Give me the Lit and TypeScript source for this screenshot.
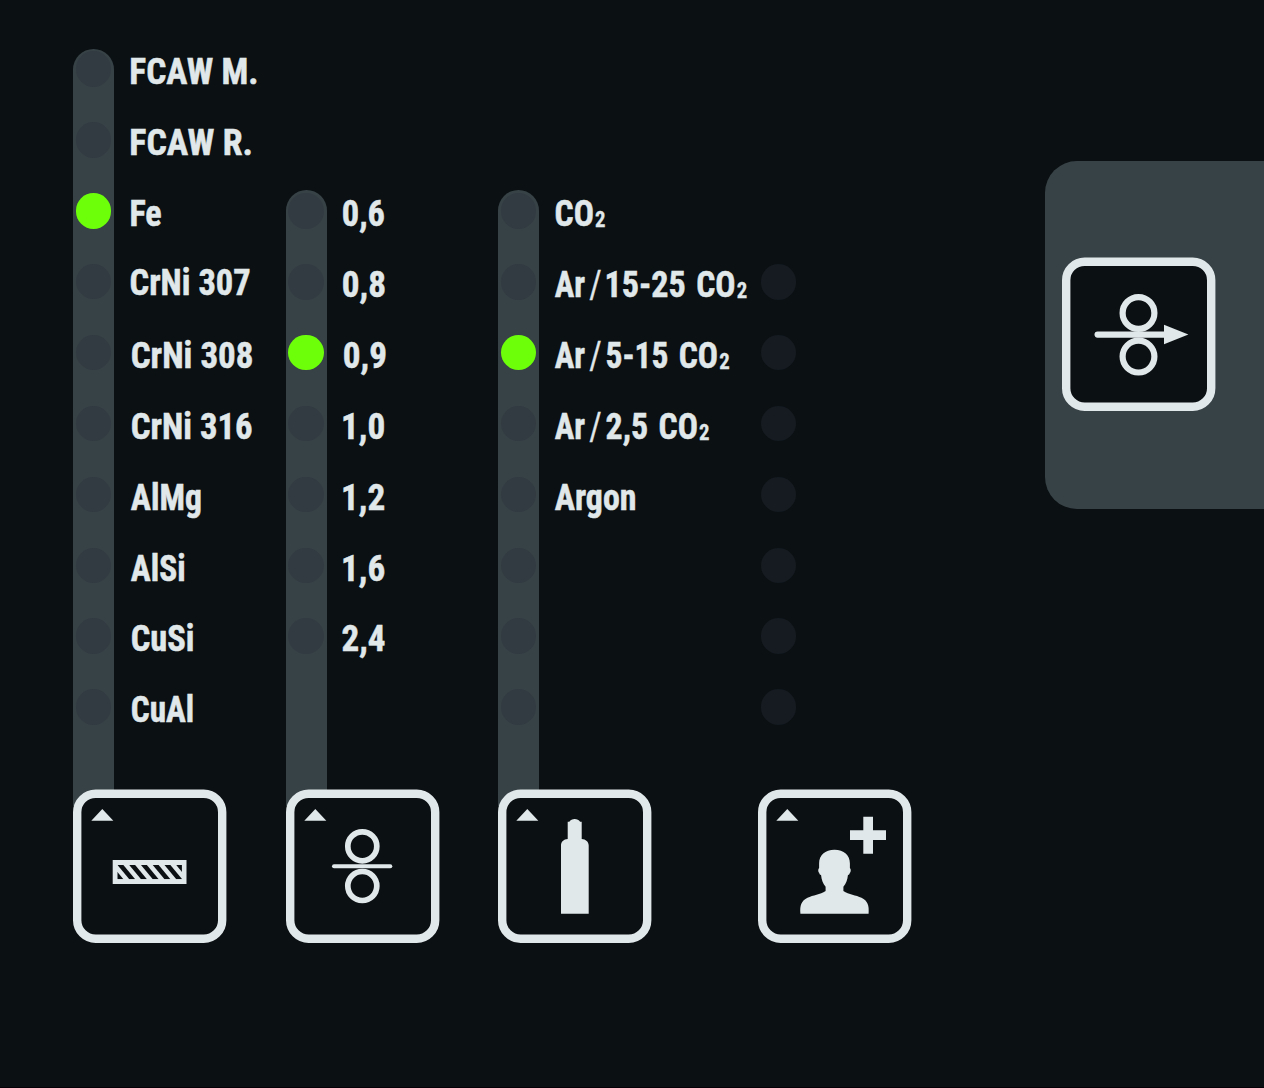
import { LitElement, html, svg, css, nothing } from 'lit';
import type { SVGTemplateResult } from 'lit';

const FAMILY = '"Roboto Condensed", "Liberation Sans Narrow", "Liberation Sans", sans-serif';
const ROW = 70.9;
const OUTLINE = 0.5;

// One printed run: text, left edge and ink width in px, optional style
type Run = [text: string, x: number, width: number, kind?: 'sub' | 'slash'];

interface Label {
  runs: Run[];
  dy?: number;
}

interface Selector {
  icon: string;
  rows: number;
  leds: number;
  active: number;
  rail: boolean;
  labels: Label[];
}

const one = (text: string, x: number, width: number, dy = 0): Label => ({ runs: [[text, x, width]], dy });

const argonMix = (share: string, width: number): Label => ({
  runs: [
    ['Ar', -0.5, 30.5],
    ['/', 34, 12, 'slash'],
    [share, 51.2, width],
    ['CO', 62.8 + width, 37.6],
    ['2', 102.4 + width, 10.6, 'sub'],
  ],
});

const SELECTORS: Selector[] = [
  {
    icon: 'material',
    rows: 10,
    leds: 10,
    active: 2,
    rail: true,
    labels: [
      one('FCAW M.', 1, 126),
      one('FCAW R.', 1, 120.4),
      one('Fe', 1, 30.2),
      one('CrNi 307', 0.2, 120, -2),
      one('CrNi 308', 1.4, 120.6),
      one('CrNi 316', 1.4, 120.6),
      one('AlMg', 0.6, 70),
      one('AlSi', 0.6, 54),
      one('CuSi', 1.4, 62),
      one('CuAl', 1.4, 61.8),
    ],
  },
  {
    icon: 'diameter',
    rows: 8,
    leds: 7,
    active: 2,
    rail: true,
    labels: [
      one('0,6', -0.5, 42),
      one('0,8', -0.5, 42),
      one('0,9', 0.5, 42),
      one('1,0', -0.3, 42),
      one('1,2', -0.3, 42),
      one('1,6', -0.3, 42),
      one('2,4', -0.8, 42.8),
    ],
  },
  {
    icon: 'gas',
    rows: 8,
    leds: 8,
    active: 2,
    rail: true,
    labels: [
      { runs: [['CO', 0.2, 37.6], ['2', 39.8, 10.6, 'sub']] },
      argonMix('15-25', 79),
      argonMix('5-15', 61.6),
      argonMix('2,5', 41.4),
      one('Argon', -0.5, 81),
    ],
  },
  { icon: 'user', rows: 7, leds: 7, active: -1, rail: false, labels: [] },
];

const STYLES = {
  main: { font: `700 37.2px ${FAMILY}`, drop: 0 },
  sub: { font: `700 22.6px ${FAMILY}`, drop: 1.4 },
  slash: { font: `400 38px ${FAMILY}`, drop: 1.4 },
};

const pen = document.createElement('canvas').getContext('2d')!;

const ICONS: Record<string, SVGTemplateResult> = {
  material: svg`
    <path class="ink" d="M39.7 70.5h73.8v24H39.7z" />
    <clipPath id="core"><path d="M44.5 75.4h64.4v14.4H44.5z" /></clipPath>
    <g clip-path="url(#core)">
      ${[-1, 0, 1, 2, 3, 4, 5].map(i => svg`
        <path class="hole" d="M${44.4 + i * 11.75} 75.4h5.9l11.9 14.4h-5.9z" />
      `)}
    </g>`,
  diameter: svg`
    <g class="line">
      <circle cx="76.3" cy="56.8" r="14.5" stroke-width="5.7" />
      <circle cx="76.3" cy="96.5" r="14.5" stroke-width="5.7" />
      <path d="M48 76.7h56.3" stroke-width="4" />
    </g>`,
  gas: svg`
    <path class="ink" d="M63 124.2V56c0-3.8 2.7-6.5 6.7-6.6V32.2h1.6c1.3-1.8 3-2.8 5.4-2.8s4.1 1 5.4 2.8h1.6v17.2c4 .1 7 2.8 7 6.6v68.2z" />`,
  user: svg`
    <path class="ink" d="M76.5 60.2C67 60.2 61.1 65.6 61.1 74V78.4C59.9 79.2 60 82.6 61.2 83.6C61.5 84.8 62 85.4 63.1 85.7C63.5 90.2 64.9 93.9 67.6 97.2V101.5C62.2 104.9 55 105.7 49.5 108.3C43.4 111.2 41.7 116 42.4 124.2H110.6C111.3 116 109.6 111.2 103.5 108.3C98 105.7 90.8 104.9 85.4 101.5V97.2C88.1 93.9 89.5 90.2 89.9 85.7C91 85.4 91.5 84.8 91.8 83.6C93 82.6 93.1 79.2 91.9 78.4V74C91.9 65.6 86 60.2 76.5 60.2Z" />
    <path class="ink" d="M105.3 27.2h9.7v13.6h13v9.7h-13v13.7h-9.7V50.5H92v-9.7h13.3z" />`,
  feed: svg`
    <g class="line">
      <circle cx="76.5" cy="55.5" r="15.9" stroke-width="6.2" />
      <circle cx="76.5" cy="99.1" r="15.9" stroke-width="6.2" />
      <path d="M35.6 77.1H104" stroke-width="6.2" />
    </g>
    <path class="ink" d="M102 67.2l24.400 9.800-24.400 9.700z" />`,
};

export class PanelKey extends LitElement {
  static properties = {
    icon: { type: String },
    marker: { type: Boolean },
  };

  declare icon: string;
  declare marker: boolean;

  static styles = css`
    :host {
      display: block;
      width: 153.5px;
      height: 154px;
      position: relative;
    }

    svg {
      display: block;
      overflow: visible;
    }

    .frame {
      fill: #0b1012;
      stroke: #e1e8ea;
      stroke-width: 8.4;
    }

    .ink {
      fill: #e1e8ea;
    }

    .hole {
      fill: #0b1012;
    }

    .line {
      fill: none;
      stroke: #e1e8ea;
      stroke-linecap: round;
    }
  `;

  protected render() {
    return html`
      <svg width="154" height="154" viewBox="0 -0.5 154 154">
        <rect class="frame" x="4.2" y="4.2" width="145" height="145" rx="18.5" />
        ${this.marker ? svg`<path class="ink" d="M18.3 31.3l11-11.8 11 11.8z" />` : nothing}
        ${ICONS[this.icon]}
      </svg>
    `;
  }
}

customElements.define('panel-key', PanelKey);

export class PrintLabel extends LitElement {
  static properties = {
    label: { attribute: false },
  };

  declare label: Label;

  static styles = css`
    :host {
      display: block;
      height: 35.5px;
    }

    svg {
      display: block;
      overflow: visible;
    }

    text {
      fill: #e1e8ea;
      font: 700 37.2px "Roboto Condensed", "Liberation Sans Narrow", "Liberation Sans", sans-serif;
      stroke: #e1e8ea;
      stroke-width: 0.5px;
      vector-effect: non-scaling-stroke;
    }

    .sub {
      font-size: 22.6px;
      stroke-width: 0.3px;
    }

    .slash {
      font-size: 38px;
      font-weight: 400;
      stroke-width: 0.3px;
    }
  `;

  // Condense each run so its ink fills the printed width
  private _run([text, x, width, kind]: Run) {
    const style = STYLES[kind ?? 'main'];
    pen.font = style.font;
    const box = pen.measureText(text);
    const scale = (width - OUTLINE) / (box.actualBoundingBoxLeft + box.actualBoundingBoxRight);
    const left = x + OUTLINE / 2 + box.actualBoundingBoxLeft * scale;
    const base = 33 + style.drop + (this.label.dy ?? 0);
    return svg`<text class=${kind ?? 'main'} transform="translate(${left} ${base}) scale(${scale} 1)">${text}</text>`;
  }

  protected render() {
    return html`<svg width="200" height="35.5">${this.label.runs.map(run => this._run(run))}</svg>`;
  }
}

customElements.define('print-label', PrintLabel);

export class LedSelector extends LitElement {
  static properties = {
    data: { attribute: false },
  };

  declare data: Selector;

  static styles = css`
    :host {
      display: flex;
      flex-direction: column;
      justify-content: flex-end;
      width: 153.5px;
      height: 943px;
    }

    .meter {
      display: flex;
      gap: 16px;
      margin-bottom: -17px;
    }

    .rail,
    .labels {
      display: flex;
      flex-direction: column;
      gap: 35.4px;
      box-sizing: border-box;
      padding-top: 2.8px;
    }

    .rail {
      flex: none;
      align-items: center;
      width: 41px;
      border-radius: 20.5px 20.5px 0 0;
    }

    .rail.filled {
      background: #374247;
    }

    .led {
      flex: none;
      width: 35.5px;
      height: 35.5px;
      border-radius: 50%;
      background: #151b21;
    }

    .filled .led {
      background: #323b41;
    }

    .rail .led.on {
      background: #6dff0a;
    }
  `;

  protected render() {
    const { icon, rows, leds, active, rail, labels } = this.data;
    return html`
      <div class="meter" style="height:${rows * ROW + 48.5}px">
        <div class="rail ${rail ? 'filled' : ''}">
          ${Array.from({ length: leds }, (_, i) => html`<div class="led ${i === active ? 'on' : ''}"></div>`)}
        </div>
        <div class="labels">
          ${labels.map(label => html`<print-label .label=${label}></print-label>`)}
        </div>
      </div>
      <panel-key icon=${icon} marker></panel-key>
    `;
  }
}

customElements.define('led-selector', LedSelector);

export class AppRoot extends LitElement {
  static styles = css`
    :host {
      display: flex;
      align-items: flex-start;
      justify-content: space-between;
      box-sizing: border-box;
      width: 1264px;
      height: 1088px;
      padding-left: 73px;
      overflow: hidden;
      background: #0b1012;
      border-bottom: 1px solid #040006;
    }

    .selectors {
      display: flex;
      gap: 59px;
    }

    led-selector:last-child {
      margin-left: 47.5px;
    }

    .side {
      box-sizing: border-box;
      width: 219.5px;
      height: 348px;
      margin-top: 161px;
      padding: 96px 0 0 17.3px;
      border-radius: 32px 0 0 32px;
      background: #374247;
    }
  `;

  protected render() {
    return html`
      <div class="selectors">
        ${SELECTORS.map(s => html`<led-selector .data=${s}></led-selector>`)}
      </div>
      <div class="side">
        <panel-key icon="feed"></panel-key>
      </div>
    `;
  }
}

customElements.define('app-root', AppRoot);
